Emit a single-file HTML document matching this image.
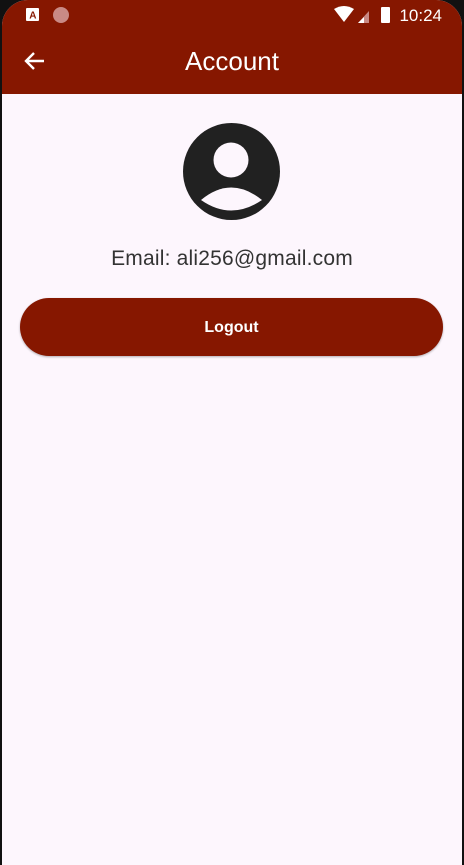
<!DOCTYPE html>
<html><head><style>
html,body{margin:0;padding:0;background:#111;}
body{width:464px;height:865px;position:relative;overflow:hidden;font-family:"Liberation Sans",Roboto,sans-serif;}
.screen{position:absolute;left:2px;top:0;width:460px;height:865px;background:#fdf6fd;border-radius:26px 26px 0 0;overflow:hidden;}
.bar{position:absolute;left:0;top:0;width:460px;height:94px;background:#861700;}
.title{position:absolute;left:0;width:460px;top:46px;text-align:center;color:#fff;font-size:26px;}
.time{position:absolute;right:20px;top:6px;color:#fff;font-size:17px;}
.email{position:absolute;left:0;width:460px;top:247px;text-align:center;color:#333;font-size:21px;letter-spacing:0.2px;}
.btn{position:absolute;left:18px;top:298px;width:423px;height:58px;border-radius:29px;background:#861700;color:#fff;font-weight:bold;font-size:16px;text-align:center;line-height:60px;box-shadow:0 1px 2px rgba(0,0,0,.3);}
</style></head><body>
<div class="screen">
<div class="bar">
<svg style="position:absolute;left:24px;top:8px" width="14" height="14"><rect x="0" y="0" width="13" height="13" rx="1" fill="#fff"/><text x="3.2" y="10.5" font-size="10" font-weight="bold" fill="#861700" font-family="Liberation Sans">A</text></svg>
<div style="position:absolute;left:51px;top:7px;width:16px;height:16px;border-radius:50%;background:#c98a85"></div>
<svg style="position:absolute;left:332px;top:6px" width="60" height="18"><path d="M0 3 Q10 -3 20 3 L10 16 Z" fill="#fff"/><path d="M24 17 L35 5 L35 17 Z" fill="#c98a85"/><path d="M24 17 L30 11 L30 17 Z" fill="#fff"/><rect x="47" y="1" width="9" height="16" rx="1" fill="#fff"/></svg>
<div class="time">10:24</div>
<svg style="position:absolute;left:22px;top:51px" width="22" height="20" viewBox="0 0 22 20"><path d="M20 10 H3 M10 2 L2 10 L10 18" stroke="#fff" stroke-width="2.4" fill="none"/></svg>
<div class="title">Account</div>
</div>
<svg style="position:absolute;left:181px;top:123px" width="98" height="98" viewBox="0 0 98 98">
<circle cx="48.5" cy="48.5" r="48.5" fill="#212121"/>
<circle cx="48" cy="37" r="17.5" fill="#fdf6fd"/>
<path d="M18 77 Q48 52 79 77 Q48 98 18 77 Z" fill="#fdf6fd"/>
</svg>
<div class="email">Email: ali256@gmail.com</div>
<div class="btn">Logout</div>
</div>
</body></html>
